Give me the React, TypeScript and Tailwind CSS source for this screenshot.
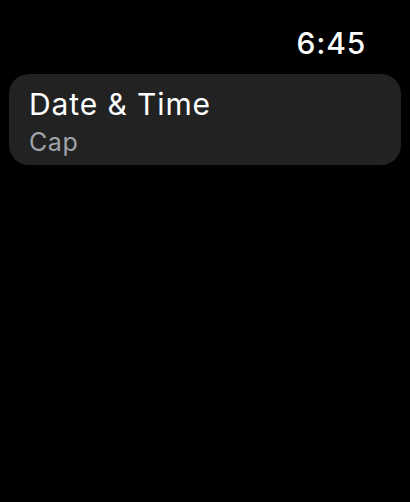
export default function App() {
  return (
    <div
      className="w-[410px] h-[502px] bg-black text-white overflow-hidden"
      style={{ fontFamily: "Inter, 'Noto Sans', sans-serif" }}
    >
      {/* status bar */}
      <div className="flex justify-end pr-[44px] pt-[25px] h-[74px]">
        <span className="text-[30px] leading-[36px] font-medium tracking-[0.8px]">6:45</span>
      </div>
      {/* list cell */}
      <div className="mx-[9px] h-[91px] rounded-[20px] bg-[#222222] px-[20px] pt-[12px]">
        <div className="text-[30px] leading-[36px] tracking-[0.9px]">Date &amp; Time</div>
        <div className="mt-[5px] text-[25px] leading-[30px] text-[#a0a3ab] tracking-[0.6px]">Cap</div>
      </div>
    </div>
  );
}
